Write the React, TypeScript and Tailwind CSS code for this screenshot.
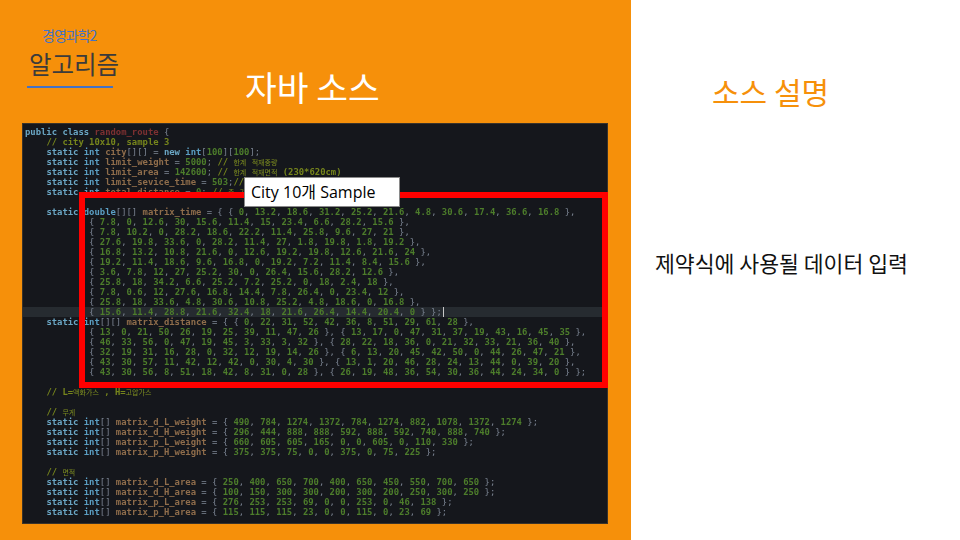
const KR = "font-['Noto_Sans_CJK_KR','Noto_Sans',sans-serif]";

const codeLines = [
  "public class random_route {",
  "    // city 10x10, sample 3",
  "    static int city[][] = new int[100][100];",
  "    static int limit_weight = 5000; // 한계 적재중량",
  "    static int limit_area = 142600; // 한계 적재면적 (230*620cm)",
  "    static int limit_sevice_time = 503;// 한계 서비스시간",
  "    static int total_distance = 0; // 총 거리",
  "",
  "    static double[][] matrix_time = { { 0, 13.2, 18.6, 31.2, 25.2, 21.6, 4.8, 30.6, 17.4, 36.6, 16.8 },",
  "            { 7.8, 0, 12.6, 30, 15.6, 11.4, 15, 23.4, 6.6, 28.2, 15.6 },",
  "            { 7.8, 10.2, 0, 28.2, 18.6, 22.2, 11.4, 25.8, 9.6, 27, 21 },",
  "            { 27.6, 19.8, 33.6, 0, 28.2, 11.4, 27, 1.8, 19.8, 1.8, 19.2 },",
  "            { 16.8, 13.2, 10.8, 21.6, 0, 12.6, 19.2, 19.8, 12.6, 21.6, 24 },",
  "            { 19.2, 11.4, 18.6, 9.6, 16.8, 0, 19.2, 7.2, 11.4, 8.4, 15.6 },",
  "            { 3.6, 7.8, 12, 27, 25.2, 30, 0, 26.4, 15.6, 28.2, 12.6 },",
  "            { 25.8, 18, 34.2, 6.6, 25.2, 7.2, 25.2, 0, 18, 2.4, 18 },",
  "            { 7.8, 0.6, 12, 27.6, 16.8, 14.4, 7.8, 26.4, 0, 23.4, 12 },",
  "            { 25.8, 18, 33.6, 4.8, 30.6, 10.8, 25.2, 4.8, 18.6, 0, 16.8 },",
  "            { 15.6, 11.4, 28.8, 21.6, 32.4, 18, 21.6, 26.4, 14.4, 20.4, 0 } };",
  "    static int[][] matrix_distance = { { 0, 22, 31, 52, 42, 36, 8, 51, 29, 61, 28 },",
  "            { 13, 0, 21, 50, 26, 19, 25, 39, 11, 47, 26 }, { 13, 17, 0, 47, 31, 37, 19, 43, 16, 45, 35 },",
  "            { 46, 33, 56, 0, 47, 19, 45, 3, 33, 3, 32 }, { 28, 22, 18, 36, 0, 21, 32, 33, 21, 36, 40 },",
  "            { 32, 19, 31, 16, 28, 0, 32, 12, 19, 14, 26 }, { 6, 13, 20, 45, 42, 50, 0, 44, 26, 47, 21 },",
  "            { 43, 30, 57, 11, 42, 12, 42, 0, 30, 4, 30 }, { 13, 1, 20, 46, 28, 24, 13, 44, 0, 39, 20 },",
  "            { 43, 30, 56, 8, 51, 18, 42, 8, 31, 0, 28 }, { 26, 19, 48, 36, 54, 30, 36, 44, 24, 34, 0 } };",
  "",
  "    // L=액화가스 , H=고압가스",
  "",
  "    // 무게",
  "    static int[] matrix_d_L_weight = { 490, 784, 1274, 1372, 784, 1274, 882, 1078, 1372, 1274 };",
  "    static int[] matrix_d_H_weight = { 296, 444, 888, 888, 592, 888, 592, 740, 888, 740 };",
  "    static int[] matrix_p_L_weight = { 660, 605, 605, 165, 0, 0, 605, 0, 110, 330 };",
  "    static int[] matrix_p_H_weight = { 375, 375, 75, 0, 0, 375, 0, 75, 225 };",
  "",
  "    // 면적",
  "    static int[] matrix_d_L_area = { 250, 400, 650, 700, 400, 650, 450, 550, 700, 650 };",
  "    static int[] matrix_d_H_area = { 100, 150, 300, 300, 200, 300, 200, 250, 300, 250 };",
  "    static int[] matrix_p_L_area = { 276, 253, 253, 69, 0, 0, 253, 0, 46, 138 };",
  "    static int[] matrix_p_H_area = { 115, 115, 115, 23, 0, 0, 115, 0, 23, 69 };",
];

function tokenClass(token: string) {
  if (/^(public|class|static|new)$/.test(token)) return "text-[#6aa6c4] font-bold";
  if (/^(int|double)$/.test(token)) return "text-[#5b9fc4] font-bold";
  if (token === "random_route") return "text-[#7d3031] font-bold";
  if (/^[\d.]+$/.test(token)) return "text-[#4d7d2b] font-bold";
  if (/^[a-zA-Z_]+$/.test(token)) return "text-[#8f6d4b] font-bold";
  return "text-[#7b8492]";
}

function CodeLine({ text }: { text: string }) {
  const commentAt = text.indexOf("//");
  const code = commentAt >= 0 ? text.slice(0, commentAt) : text;
  const comment = commentAt >= 0 ? text.slice(commentAt) : "";
  const tokens = code.split(/([a-zA-Z_]+|[\d.]+)/);
  const commentParts = comment.split(/([가-힣]+)/);
  return (
    <>
      {tokens.map((t, i) => (
        <span key={i} className={tokenClass(t)}>
          {t}
        </span>
      ))}
      {commentParts.map((t, i) => (
        <span key={i} className={/[가-힣]/.test(t) ? "text-[#7f8f20] text-[7px]" : "text-[#76851c] font-bold"}>
          {t}
        </span>
      ))}
    </>
  );
}

export default function App() {
  return (
    <div className={`flex w-[960px] h-[540px] overflow-hidden bg-white ${KR}`}>
      <div className="w-[631px] h-full bg-[#f6900a] flex flex-col">
        <div className="h-[123px] flex items-start shrink-0">
          <div className="ml-[27px] mt-[25px] w-[86px] shrink-0">
            <div className="ml-[15px] text-[14px] leading-[20px] tracking-[-1px] text-[#4472c4] whitespace-nowrap">
              경영과학2
            </div>
            <div className="ml-[2px] mt-[1px] text-[24.5px] leading-[36px] text-[#3b3b3b] whitespace-nowrap">
              알고리즘
            </div>
            <div className="mt-[4px] h-[2px] bg-[#4472c4]" />
          </div>
          <div className="ml-[132px] mt-[63px] text-[34.5px] leading-[46px] text-white whitespace-nowrap">
            자바 소스
          </div>
        </div>

        <div className="relative ml-[22px] w-[586px] h-[401px] bg-[#15171c] border border-[#3a332a]">
          <div className="absolute left-0 right-[4px] top-[183px] h-[10px] bg-[#262b30]" />
          <pre className="relative pl-[2px] pt-[3px] blur-[0.45px] font-['DejaVu_Sans_Mono','Noto_Sans_CJK_KR',monospace] text-[8.9px] leading-[10px]">
            {codeLines.map((line, i) => (
              <div key={i} className="h-[10px] whitespace-pre">
                <CodeLine text={line} />
              </div>
            ))}
          </pre>
          <div className="absolute left-[420px] top-[183px] w-[1px] h-[10px] bg-[#c8c8c8]" />
          <div className="absolute left-[56px] top-[68px] w-[529px] h-[196px] border-[6px] border-[#ff0000]" />
          <div className="absolute left-[221px] top-[53px] w-[156px] h-[30px] bg-white border border-[#8a8a8a] flex items-center pl-[6px] font-['Open_Sans','Noto_Sans_CJK_KR',sans-serif] text-[16px] text-black whitespace-nowrap">
            City 10개 Sample
          </div>
        </div>
      </div>

      <div className="flex-1 flex flex-col">
        <div className="mt-[69px] ml-[81px] text-[30px] leading-[44px] text-[#f6900a] whitespace-nowrap">
          소스 설명
        </div>
        <div className="mt-[134px] ml-[24px] text-[21.6px] leading-[32px] text-[#111] whitespace-nowrap">
          제약식에 사용될 데이터 입력
        </div>
      </div>
    </div>
  );
}
